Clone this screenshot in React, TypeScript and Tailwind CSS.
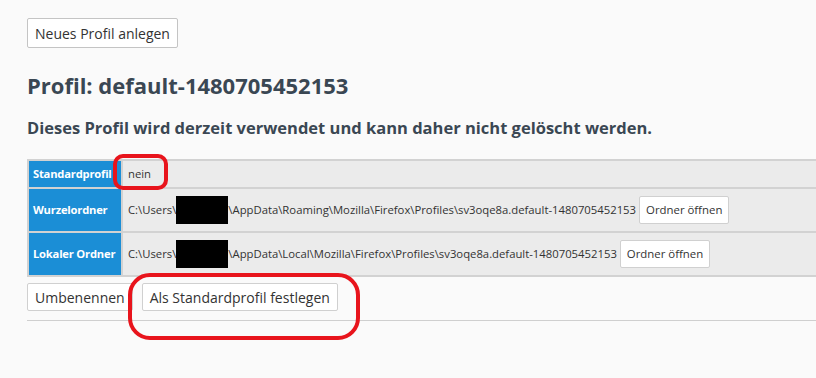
const font = { fontFamily: '"Open Sans", "Noto Sans", sans-serif' };

const Redacted = () => <span className="inline-block w-[52px] h-[28px] bg-black align-middle" />;

const OpenBtn = () => (
  <button className="ml-[3px] h-[28px] px-[6px] bg-white border border-[#d0d0d0] rounded-[2px] text-[11.4px] text-[#333] align-middle">
    Ordner öffnen
  </button>
);

export default function App() {
  return (
    <div className="relative w-[816px] h-[378px] bg-[#fafafa] overflow-hidden text-[#333]" style={font}>
      <div className="pl-[27px] pt-[18px]">
        <button className="h-[30px] px-[7px] bg-white border border-[#c4c4c4] rounded-[2px] text-[14px] text-[#333]">
          Neues Profil anlegen
        </button>
        <h1 className="mt-[22px] text-[22px] font-bold text-[#3a4753] leading-[30px]">Profil: default-1480705452153</h1>
        <h2 className="mt-[16px] text-[16.5px] font-bold text-[#3a4753] leading-[24px]">
          Dieses Profil wird derzeit verwendet und kann daher nicht gelöscht werden.
        </h2>

        <table className="mt-[19px] w-[800px] border-collapse text-[11.3px]">
          <tbody>
            <tr className="h-[28px]">
              <th className="w-[94px] bg-[#1b8ed6] text-white font-bold text-left px-[4px] border-2 border-[#d2d2d2] whitespace-nowrap text-[11.2px] tracking-[-0.2px]">Standardprofil</th>
              <td className="bg-[#ebebeb] px-[5px] border-2 border-[#d2d2d2]">nein</td>
            </tr>
            <tr className="h-[44px]">
              <th className="bg-[#1b8ed6] text-white font-bold text-left px-[4px] border-2 border-[#d2d2d2] whitespace-nowrap text-[11.2px] tracking-[-0.2px]">Wurzelordner</th>
              <td className="bg-[#ebebeb] px-[5px] border-2 border-[#d2d2d2] whitespace-nowrap">
                <span className="align-middle">C:\Users\</span>
                <Redacted />
                <span className="align-middle">\AppData\Roaming\Mozilla\Firefox\Profiles\sv3oqe8a.default-1480705452153</span>
                <OpenBtn />
              </td>
            </tr>
            <tr className="h-[44px]">
              <th className="bg-[#1b8ed6] text-white font-bold text-left px-[4px] border-2 border-[#d2d2d2] whitespace-nowrap text-[11.2px] tracking-[-0.2px]">Lokaler Ordner</th>
              <td className="bg-[#ebebeb] px-[5px] border-2 border-[#d2d2d2] whitespace-nowrap">
                <span className="align-middle">C:\Users\</span>
                <Redacted />
                <span className="align-middle">\AppData\Local\Mozilla\Firefox\Profiles\sv3oqe8a.default-1480705452153</span>
                <OpenBtn />
              </td>
            </tr>
          </tbody>
        </table>

        <div className="flex gap-[9px] mt-[6px]">
          <button className="h-[28px] px-[7px] bg-white border border-[#d0d0d0] rounded-[2px] text-[14px] text-[#333]">Umbenennen</button>
          <button className="h-[28px] px-[7px] bg-white border border-[#d0d0d0] rounded-[2px] text-[14px] text-[#333]">Als Standardprofil festlegen</button>
        </div>
        <div className="mt-[9px] h-px bg-[#cfcfcf]" />
      </div>

      {/* annotations */}
      <div className="absolute left-[113px] top-[154px] w-[55px] h-[36px] border-[4px] border-[#e8141c] rounded-[10px]" />
      <div className="absolute left-[128px] top-[273px] w-[232px] h-[67px] border-[4px] border-[#e8141c] rounded-[22px]" />
    </div>
  );
}
